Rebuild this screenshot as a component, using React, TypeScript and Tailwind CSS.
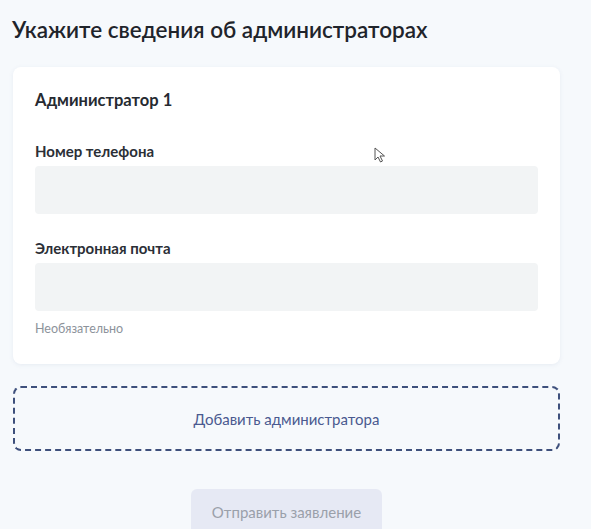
import React from 'react';

function Field({ label, hint }: { label: string; hint?: string }) {
  return (
    <div className="flex flex-col">
      <label className="text-[15px] leading-[18px] font-bold text-[#2b2f36]">{label}</label>
      <div className="mt-[6px] h-[48px] rounded-[4px] bg-[#f2f4f5]" />
      {hint && <span className="mt-[11px] text-[12.5px] leading-[14px] text-[#8d939b]">{hint}</span>}
    </div>
  );
}

export default function App() {
  return (
    <div
      className="relative w-[591px] h-[529px] overflow-hidden bg-[#f6f9fc] px-[13px] pt-[15px]"
      style={{ fontFamily: 'Lato, "Noto Sans", sans-serif' }}
    >
      <h1 className="-ml-[1px] text-[22.5px] leading-[30px] font-semibold text-[#1f242b]">
        Укажите сведения об администраторах
      </h1>

      <div className="mt-[22px] w-[547px] rounded-[8px] bg-white px-[22px] pt-[22px] pb-[28px] shadow-[0_1px_4px_rgba(120,140,170,0.12)]">
        <h2 className="text-[16.5px] leading-[22px] font-bold text-[#262a31]">Администратор 1</h2>
        <div className="mt-[31px] flex flex-col gap-[25px]">
          <Field label="Номер телефона" />
          <Field label="Электронная почта" hint="Необязательно" />
        </div>
      </div>

      <button className="mt-[22px] flex h-[65px] w-[547px] items-center justify-center rounded-[8px] border-2 border-dashed border-[#3e507c] pt-[2px] text-[15px] text-[#4a5a90]">
        Добавить администратора
      </button>

      <div className="mt-[38px] flex justify-center pr-[18px]">
        <button className="h-[46px] w-[191px] rounded-[6px] bg-[#e6e9f4] text-[15px] text-[#9aa0aa]">
          Отправить заявление
        </button>
      </div>

      <svg className="absolute left-[374px] top-[147px]" width="13" height="17" viewBox="0 0 13 17">
        <path d="M1 1 L1 13 L4 10 L6.5 15 L8.5 14 L6 9 L10.5 9 Z" fill="white" stroke="#555" strokeWidth="1" strokeLinejoin="round" />
      </svg>
    </div>
  );
}
